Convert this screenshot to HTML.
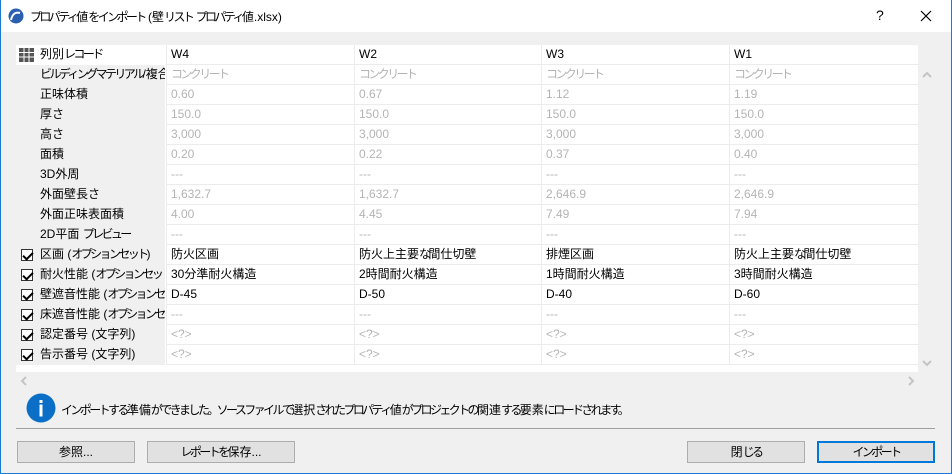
<!DOCTYPE html>
<html><head><meta charset="utf-8"><style>
*{margin:0;padding:0;box-sizing:border-box}
body{width:952px;height:474px;overflow:hidden;background:#f0f0f0;font-family:"Liberation Sans","Noto Sans CJK JP",sans-serif;font-size:12px;color:#000;position:relative}
.k{letter-spacing:-2.6px}
.win{position:absolute;left:0;top:0;width:952px;height:474px;border:1px solid #1a7ad4;border-top:none}
.title{position:absolute;left:0;top:0;width:952px;height:32px;background:#fff}
.title .t{position:absolute;left:30px;top:8px;font-size:12px}
.abs{position:absolute}
.grid{position:absolute;left:16px;top:45px;width:902px;height:327px;background:#fff}
.row{position:absolute;left:0;height:20px;width:902px;border-bottom:1px solid #ececec}
.c{position:absolute;top:0;height:20px;line-height:19px;white-space:nowrap;overflow:hidden;padding-left:4px}
.lab{left:0;width:150px;background:#f0f0f0;border-right:1px solid #fff}
.g{color:#b4b4b4}
.cb{position:absolute;left:5px;top:4px;width:12px;height:12px;border:1px solid #333;background:#fff}
.cb:after{content:"";position:absolute;left:3px;top:0px;width:4px;height:8px;border:solid #000;border-width:0 2px 2px 0;transform:rotate(45deg)}
.btn{position:absolute;top:441px;height:22px;background:#e1e1e1;border:1px solid #adadad;text-align:center;line-height:20px}
</style></head><body>
<div class="title">
<svg class="abs" style="left:8px;top:8px" width="16" height="16"><circle cx="8" cy="8" r="7.5" fill="#2a5fb0"/><path d="M3 12 Q5 3 12 5" stroke="#fff" stroke-width="2" fill="none"/></svg>
<div class="t j">プロパティ値をインポート (壁リスト プロパティ値.xlsx)</div>
<div class="abs" style="left:876px;top:7px;font-size:14px">?</div>
<svg class="abs" style="left:920px;top:10px" width="12" height="12"><path d="M1 1L11 11M11 1L1 11" stroke="#000" stroke-width="1.2"/></svg>
</div>
<div class="win"></div>
<div class="grid" id="g"></div>
<div class="abs" style="left:918px;top:65px;width:20px;height:307px;background:#f0f0f0"></div>
<svg class="abs" style="left:921px;top:70px" width="12" height="10"><path d="M2 7L6 3L10 7" stroke="#c4c4c4" stroke-width="2" fill="none"/></svg>
<svg class="abs" style="left:921px;top:358px" width="12" height="10"><path d="M2 3L6 7L10 3" stroke="#c4c4c4" stroke-width="2" fill="none"/></svg>
<svg class="abs" style="left:19px;top:375px" width="10" height="12"><path d="M7 2L3 6L7 10" stroke="#c4c4c4" stroke-width="2" fill="none"/></svg>
<svg class="abs" style="left:906px;top:375px" width="10" height="12"><path d="M3 2L7 6L3 10" stroke="#c4c4c4" stroke-width="2" fill="none"/></svg>
<svg class="abs" style="left:26px;top:393px" width="30" height="30"><circle cx="15" cy="15" r="14.5" fill="#0c6fc7"/><rect x="13.5" y="7" width="3" height="3" fill="#fff"/><rect x="13.5" y="11.5" width="3" height="12" fill="#fff"/></svg>
<div class="abs j" style="left:61px;top:401px;white-space:nowrap">インポートする準備ができました。ソースファイルで選択されたプロパティ値がプロジェクトの関連する要素にロードされます。</div>
<div class="abs" style="left:16px;top:428px;width:919px;height:1px;background:#a0a0a0"></div>
<div class="btn j" style="left:17px;width:118px">参照...</div>
<div class="btn j" style="left:147px;width:148px">レポートを保存...</div>
<div class="btn j" style="left:687px;width:118px">閉じる</div>
<div class="btn j" style="left:817px;width:118px;border:2px solid #0078d7;line-height:18px">インポート</div>
<script>
var cols=[150,338,525,713];var w=[188,187,188,189];
var rows=[
["ビルディングマテリアル/複合",0,["コンクリート","コンクリート","コンクリート","コンクリート"],1],
["正味体積",0,["0.60","0.67","1.12","1.19"],1],
["厚さ",0,["150.0","150.0","150.0","150.0"],1],
["高さ",0,["3,000","3,000","3,000","3,000"],1],
["面積",0,["0.20","0.22","0.37","0.40"],1],
["3D外周",0,["---","---","---","---"],1],
["外面壁長さ",0,["1,632.7","1,632.7","2,646.9","2,646.9"],1],
["外面正味表面積",0,["4.00","4.45","7.49","7.94"],1],
["2D平面 プレビュー",0,["---","---","---","---"],1],
["区画 (オプションセット)",1,["防火区画","防火上主要な間仕切壁","排煙区画","防火上主要な間仕切壁"],0],
["耐火性能 (オプションセット)",1,["30分準耐火構造","2時間耐火構造","1時間耐火構造","3時間耐火構造"],0],
["壁遮音性能 (オプションセット)",1,["D-45","D-50","D-40","D-60"],0],
["床遮音性能 (オプションセット)",1,["---","---","---","---"],1],
["認定番号 (文字列)",1,["<?>","<?>","<?>","<?>"],1],
["告示番号 (文字列)",1,["<?>","<?>","<?>","<?>"],1]];
var h='<div class="row" style="top:0"><div class="c lab j" style="padding-left:24px;background:#fff">列別レコード</div>'+
'<svg style="position:absolute;left:3px;top:3px" width="15" height="14"><rect x="0" y="0" width="15" height="14" fill="#555"/><path d="M0 4.5H15M0 9H15M5 0V14M10 0V14" stroke="#fff"/></svg>';
["W4","W2","W3","W1"].forEach(function(t,i){h+='<div class="c" style="left:'+cols[i]+'px;width:'+w[i]+'px;border-left:1px solid #ececec">'+t+'</div>'});
h+='</div>';
rows.forEach(function(r,k){
h+='<div class="row" style="top:'+(20+k*20)+'px"><div class="c lab j" style="padding-left:24px">'+r[0].replace(/</g,'&lt;')+'</div>';
if(r[1])h+='<div class="cb"></div>';
r[2].forEach(function(t,i){h+='<div class="c j'+(r[3]?' g':'')+'" style="left:'+cols[i]+'px;width:'+w[i]+'px;border-left:1px solid #ececec">'+t.replace(/</g,'&lt;').replace(/>/g,'&gt;')+'</div>'});
h+='</div>';});
document.getElementById('g').innerHTML=h;
document.querySelectorAll('.j').forEach(function(e){
e.innerHTML=e.innerHTML.replace(/([\u3040-\u30FF\u3000-\u303F\uFF08\uFF09]+)/g,'<span class="k">$1</span>');});
</script>
</body></html>
